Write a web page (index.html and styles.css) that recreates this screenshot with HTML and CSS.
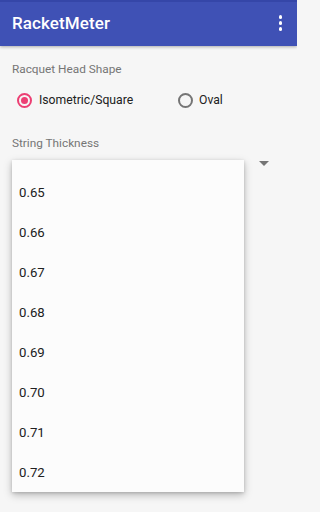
FILE: index.html
```html
<!DOCTYPE html>
<html>
<head>
<meta charset="utf-8">
<link rel="stylesheet" href="styles.css">
</head>
<body>
<header class="appbar">
  <h1 class="title">RacketMeter</h1>
  <div class="overflow"><span></span><span></span><span></span></div>
</header>
<main class="content">
  <div class="label">Racquet Head Shape</div>
  <div class="radios">
    <div class="radio checked"><span class="ring"><span class="dot"></span></span><span class="rtext">Isometric/Square</span></div>
    <div class="radio"><span class="ring"></span><span class="rtext">Oval</span></div>
  </div>
  <div class="label label2">String Thickness</div>
  <div class="spinner">
    <svg class="arrow" width="10" height="5" viewBox="0 0 10 5"><path d="M0 0 L10 0 L5 5 Z" fill="#757575"/></svg>
  </div>
</main>
<div class="popup">
  <div class="item">0.65</div>
  <div class="item">0.66</div>
  <div class="item">0.67</div>
  <div class="item">0.68</div>
  <div class="item">0.69</div>
  <div class="item">0.70</div>
  <div class="item">0.71</div>
  <div class="item">0.72</div>
</div>
</body>
</html>
```
FILE: styles.css
```css
html {
  background: #f6f6f6;
}
html, body {
  margin: 0;
  padding: 0;
}
body {
  width: 297px;
  height: 512px;
  background: #f6f6f6;
  font-family: Roboto, "Liberation Sans", sans-serif;
  position: relative;
  overflow: hidden;
}
.appbar {
  height: 44px;
  border-top: 2px solid #3546a8;
  background: #3f51b5;
  display: flex;
  align-items: center;
  justify-content: space-between;
  padding: 0 15px 0 12px;
  box-shadow: 0 1px 3px rgba(0,0,0,0.3);
  position: relative;
}
.title {
  margin: 0;
  color: #fff;
  font-size: 17px;
  font-weight: 500;
  letter-spacing: 0.1px;
  margin-top: -2px;
}
.overflow {
  display: flex;
  flex-direction: column;
  gap: 2.5px;
  margin-top: -2px;
}
.overflow span {
  width: 3.5px;
  height: 3.5px;
  border-radius: 50%;
  background: #fff;
}
.content {
  padding: 0 12px;
}
.label {
  color: #757575;
  font-size: 11.8px;
  line-height: 16px;
  margin-top: 15px;
}
.radios {
  display: flex;
  margin-top: 15px;
  height: 16px;
  align-items: center;
}
.radio {
  display: flex;
  align-items: center;
  color: #212121;
  font-size: 12.2px;
}
.radio.checked {
  margin-left: 5px;
  width: 161px;
}
.ring {
  box-sizing: border-box;
  width: 15px;
  height: 15px;
  border: 2px solid #757575;
  border-radius: 50%;
  display: flex;
  align-items: center;
  justify-content: center;
  margin-right: 6px;
}
.checked .ring {
  border-color: #ec3f73;
  margin-right: 7px;
}
.dot {
  width: 7px;
  height: 7px;
  border-radius: 50%;
  background: #ec3f73;
}
.label2 {
  margin-top: 27px;
}
.spinner {
  height: 30px;
  display: flex;
  justify-content: flex-end;
  align-items: center;
  padding-right: 16px;
}
.arrow {
  display: block;
  margin-top: -5px;
}
.popup {
  position: absolute;
  left: 12px;
  top: 160px;
  width: 232px;
  height: 332px;
  box-sizing: border-box;
  padding-top: 13px;
  background: #fcfcfc;
  box-shadow: 0 3px 8px rgba(0,0,0,0.25), 0 1px 3px rgba(0,0,0,0.15);
}
.item {
  height: 40px;
  line-height: 40px;
  padding-left: 7px;
  color: #212121;
  font-size: 13.2px;
}
```
